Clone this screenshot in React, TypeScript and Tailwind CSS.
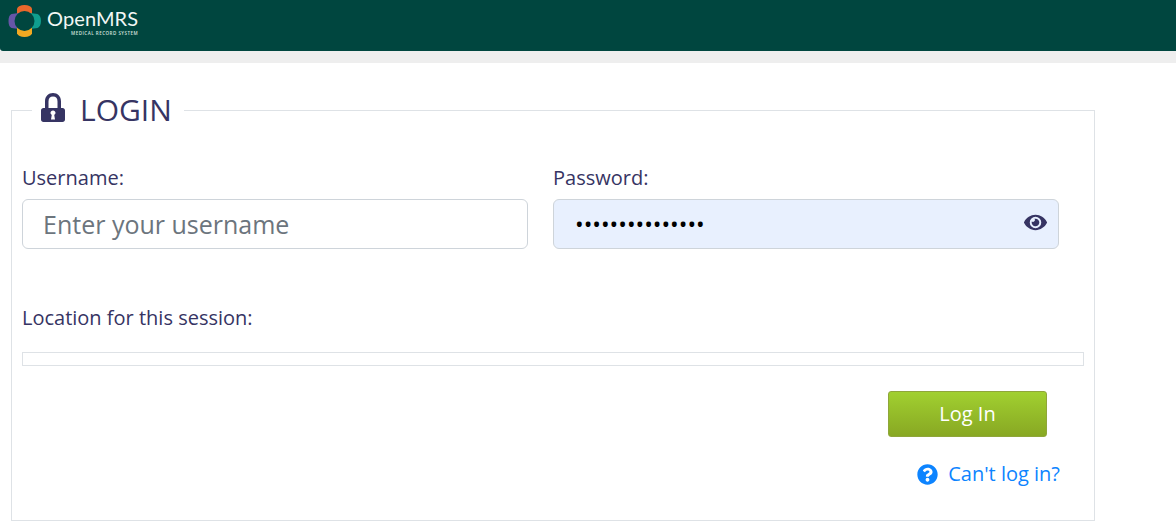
import { FaEye, FaQuestionCircle } from "react-icons/fa";

function Logo() {
  return (
    <svg width="34" height="33" viewBox="0 0 34 33" className="shrink-0">
      <path d="M9 11 L9 3.500 C10 1.200 12.500 0 16.500 0 C20.500 0 23 1.200 24 3.500 L24 11Z" fill="#e8682c" />
      <path d="M11 8 L3.500 9 C1.300 10 0.500 12.500 0.500 16 C0.500 19.500 1.300 22 3.500 23 L11 24Z" fill="#6656a8" />
      <path d="M22 8 L29.500 9 C31.700 10 33 12.500 33 16 C33 19.500 31.700 22 29.500 23 L22 24Z" fill="#0f9e8e" />
      <path d="M9 21 L9 28.500 C10 30.800 12.500 32 16.500 32 C20.500 32 23 30.800 24 28.500 L24 21Z" fill="#f2a922" />
      <circle cx="16.500" cy="16" r="10" fill="#00463f" />
    </svg>
  );
}

function Lock() {
  return (
    <svg width="24" height="29" viewBox="0 0 24 29" className="shrink-0">
      <path
        fillRule="evenodd"
        fill="#363463"
        d="M4 15 V8.500 C4 3 7.500 0 12 0 C16.500 0 20 3 20 8.500 V15 H21.500 C23 15 24 16 24 17.500 V26.500 C24 28 23 29 21.500 29 H2.500 C1 29 0 28 0 26.500 V17.500 C0 16 1 15 2.500 15 Z M7.500 15 H16.500 V8.500 C16.500 5 15 3.500 12 3.500 C9 3.500 7.500 5 7.500 8.500 Z M12 17.500 C10.500 17.500 9.500 18.500 9.500 19.800 C9.500 20.700 10 21.400 10.800 21.800 L10 26.500 H14 L13.200 21.800 C14 21.400 14.500 20.700 14.500 19.800 C14.500 18.500 13.500 17.500 12 17.500 Z"
      />
    </svg>
  );
}

export default function App() {
  return (
    <div className="w-[1176px] h-[532px] overflow-hidden bg-white font-['Open_Sans',sans-serif] text-[#363463]">
      <header className="h-[51px] bg-[#00463f] rounded-bl-[3px] flex items-start pl-[8px] pt-[5px]">
        <Logo />
        <div className="ml-[5px] flex flex-col items-end">
          <span className="font-['Lato',sans-serif] font-normal text-[#f2f7f5] text-[20px] leading-[26px] tracking-[0.1px]">OpenMRS</span>
          <span className="text-[#d5e2df] text-[4.500px] leading-[5px] tracking-[0.5px] mt-[0px] font-semibold">MEDICAL RECORD SYSTEM</span>
        </div>
      </header>
      <div className="h-[12px] bg-[#eeeeee]" />
      <main className="pl-[11px] pt-[27px]">
        <fieldset className="w-[1084px] h-[431px] border border-[#dee2e6] pl-[10px] pr-[10px]">
          <legend className="ml-[10px] pl-[9px] pr-[12px] h-[40px] flex items-start gap-[15px]">
            <span className="pt-[3px]">
              <Lock />
            </span>
            <span className="text-[30px] leading-[40px]">LOGIN</span>
          </legend>
          <div className="flex gap-[25px] mt-[34px]">
            <div className="w-[506px]">
              <label className="block text-[20px] leading-[27px] mb-[8px]">Username:</label>
              <input
                type="text"
                placeholder="Enter your username"
                className="w-full h-[50px] px-[20px] rounded-[6px] border border-[#ced4da] bg-white text-[25px] placeholder:text-[#6c757d] outline-none"
              />
            </div>
            <div className="w-[506px]">
              <label className="block text-[20px] leading-[27px] mb-[8px]">Password:</label>
              <div className="relative">
                <input
                  type="password"
                  defaultValue="Admin1234567890"
                  className="w-full h-[50px] pl-[21px] pr-[44px] rounded-[6px] border border-[#ced4da] bg-[#e8f0fe] text-[23px] text-black outline-none"
                />
                <FaEye className="absolute right-[12px] top-[12px] text-[#363463]" size={23} />
              </div>
            </div>
          </div>
          <label className="block mt-[55px] text-[20px] leading-[27px]">Location for this session:</label>
          <div className="mt-[21px] h-[14px] w-full border border-[#dee2e6]" />
          <div className="flex justify-end mt-[25px] pr-[37px]">
            <button className="w-[159px] h-[46px] rounded-[3px] border border-[#8fa63a] bg-gradient-to-b from-[#a1d030] to-[#88a823] text-white text-[20px]">
              Log In
            </button>
          </div>
          <div className="flex justify-end items-center gap-[10px] mt-[21px] pr-[24px] text-[#0d84ff]">
            <FaQuestionCircle size={21} />
            <span className="text-[20px] leading-[32px]">Can't log in?</span>
          </div>
        </fieldset>
      </main>
    </div>
  );
}
